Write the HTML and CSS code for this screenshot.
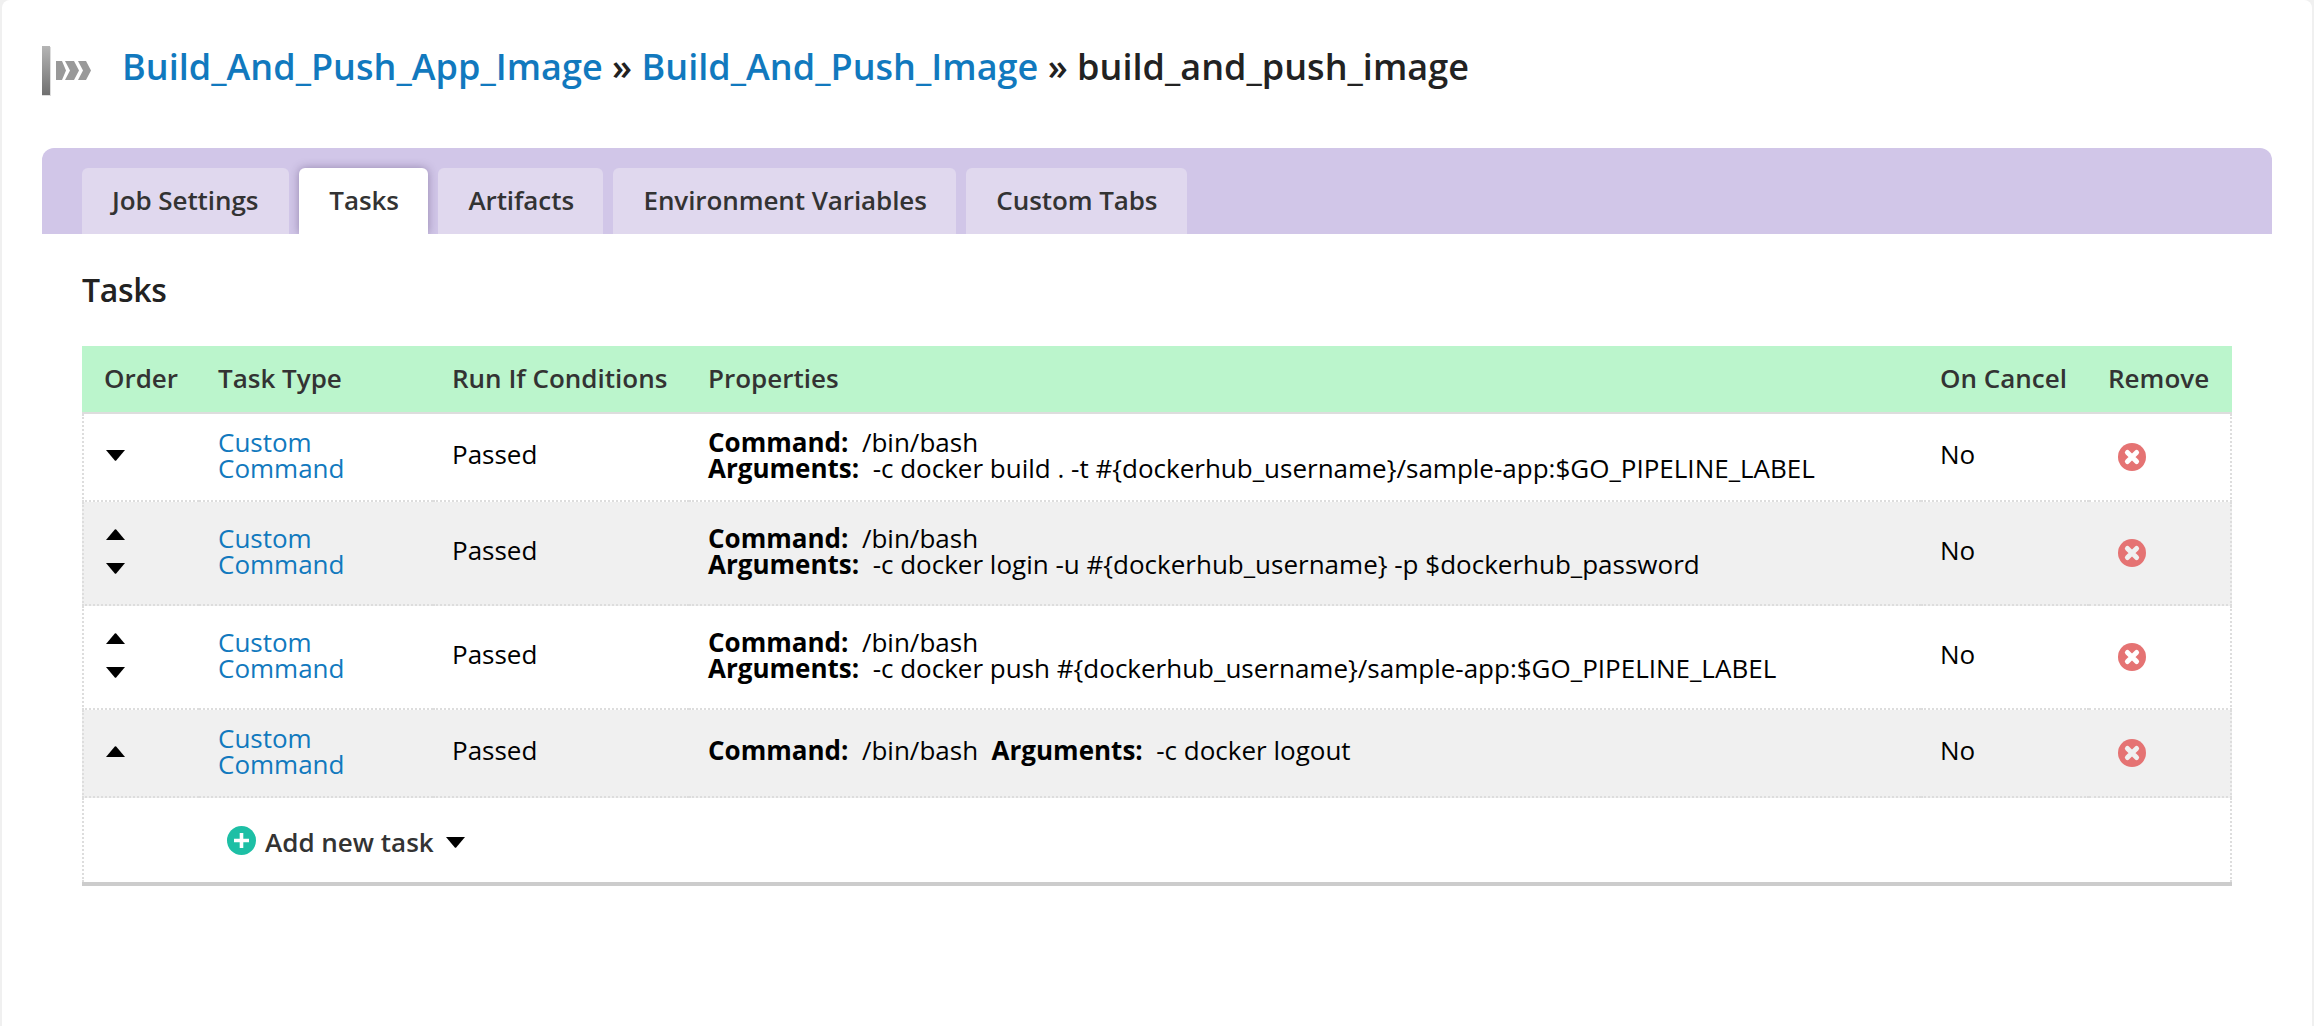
FILE: index.html
```html
<!DOCTYPE html>
<html lang="en">
<head>
<meta charset="utf-8">
<title>build_and_push_image</title>
<link rel="stylesheet" href="styles.css">
</head>
<body>
<svg class="defs" width="0" height="0" aria-hidden="true">
  <defs>
    <linearGradient id="bar" x1="0" y1="0" x2="0" y2="1"><stop offset="0" stop-color="#b5b5b5"/><stop offset="1" stop-color="#707070"/></linearGradient>
    <symbol id="down" viewBox="0 0 19 11"><path d="M0 0h19l-8.800 10.400q-.7.800-1.400 0z"/></symbol>
    <symbol id="up" viewBox="0 0 19 11"><path d="M0 11h19L10.200.6q-.7-.8-1.400 0z"/></symbol>
    <symbol id="cross" viewBox="0 0 28 28"><circle cx="14" cy="14" r="14" fill="#e57373"/><path d="M9.400 9.400l9.200 9.200M18.600 9.400l-9.200 9.200" stroke="currentColor" stroke-width="5" stroke-linecap="round"/></symbol>
  </defs>
</svg>
<main class="page">
  <header class="title">
    <svg class="job-icon" width="52" height="54" viewBox="0 0 52 54">
      <path d="M0 3h9v49H0z" fill="#ddd"/>
      <path d="M0 2h8v49H0z" fill="url(#bar)"/>
      <path d="M14 17h6l4 9.500-4 9.500h-6zM23 17h9l5 9.500-5 9.500h-9l5-9.500zM36 17h8l5 9.500-5 9.500h-8l5-9.500z" fill="#999"/>
    </svg>
    <h1 class="crumbs"><a>Build_And_Push_App_Image</a> » <a>Build_And_Push_Image</a> » build_and_push_image</h1>
  </header>
  <nav class="tabs">
    <a class="tab">Job Settings</a>
    <a class="tab tab-active">Tasks</a>
    <a class="tab">Artifacts</a>
    <a class="tab">Environment Variables</a>
    <a class="tab">Custom Tabs</a>
  </nav>
  <section class="content">
    <h2 class="heading">Tasks</h2>
    <table class="tasks">
      <colgroup><col class="c-order"><col class="c-type"><col class="c-run"><col class="c-props"><col class="c-cancel"><col class="c-remove"></colgroup>
      <thead>
        <tr><th>Order</th><th>Task Type</th><th>Run If Conditions</th><th>Properties</th><th>On Cancel</th><th>Remove</th></tr>
      </thead>
      <tbody>
        <tr class="row">
          <td><div class="order"><svg class="arrow"><use href="#down"/></svg></div></td>
          <td class="two-line"><a>Custom Command</a></td><td>Passed</td>
          <td class="two-line"><b>Command:</b>&nbsp; /bin/bash<br><b>Arguments:</b>&nbsp; -c docker build . -t #{dockerhub_username}/sample-app:$GO_PIPELINE_LABEL</td>
          <td>No</td><td><svg class="remove"><use href="#cross"/></svg></td>
        </tr>
        <tr class="row row-tall row-alt">
          <td><div class="order"><svg class="arrow"><use href="#up"/></svg><svg class="arrow"><use href="#down"/></svg></div></td>
          <td class="two-line"><a>Custom Command</a></td><td>Passed</td>
          <td class="two-line"><b>Command:</b>&nbsp; /bin/bash<br><b>Arguments:</b>&nbsp; -c docker login -u #{dockerhub_username} -p $dockerhub_password</td>
          <td>No</td><td><svg class="remove"><use href="#cross"/></svg></td>
        </tr>
        <tr class="row row-tall">
          <td><div class="order"><svg class="arrow"><use href="#up"/></svg><svg class="arrow"><use href="#down"/></svg></div></td>
          <td class="two-line"><a>Custom Command</a></td><td>Passed</td>
          <td class="two-line"><b>Command:</b>&nbsp; /bin/bash<br><b>Arguments:</b>&nbsp; -c docker push #{dockerhub_username}/sample-app:$GO_PIPELINE_LABEL</td>
          <td>No</td><td><svg class="remove"><use href="#cross"/></svg></td>
        </tr>
        <tr class="row row-alt">
          <td><div class="order"><svg class="arrow"><use href="#up"/></svg></div></td>
          <td class="two-line"><a>Custom Command</a></td><td>Passed</td>
          <td><b>Command:</b>&nbsp; /bin/bash&nbsp; <b>Arguments:</b>&nbsp; -c docker logout</td>
          <td>No</td><td><svg class="remove"><use href="#cross"/></svg></td>
        </tr>
        <tr class="row-add">
          <td></td>
          <td colspan="5"><div class="add">
            <svg class="plus" viewBox="0 0 29 29"><circle cx="14.500" cy="14.500" r="14.500" fill="#1dbfa5"/><path d="M14.500 7v15M7 14.500h15" stroke="#fff" stroke-width="3.600"/></svg>
            <span>Add new task</span>
            <svg class="arrow"><use href="#down"/></svg>
          </div></td>
        </tr>
      </tbody>
    </table>
  </section>
</main>
</body>
</html>
```
FILE: styles.css
```css
* { box-sizing: border-box; }
body {
  margin: 0;
  background: #f0f0f0;
  color: #000;
  font: 400 26px/26px "Open Sans", "Noto Sans", sans-serif;
}
a { color: #1179be; }
.defs { display: block; }
.page {
  min-height: 1026px;
  margin: 0 2px;
  padding: 0 40px;
  background: #fff;
  border-radius: 8px 8px 0 0;
}
.title {
  display: flex;
  align-items: flex-start;
  height: 148px;
  padding-top: 44px;
}
.job-icon { flex: none; }
.crumbs {
  margin: 0 0 0 28px;
  padding-top: 3px;
  font-size: 36px;
  line-height: 40px;
  font-weight: 600;
  letter-spacing: .02px;
  color: #222;
  white-space: nowrap;
}
.tabs {
  display: flex;
  gap: 10px;
  height: 86px;
  padding: 20px 40px 0;
  overflow: hidden;
  background: #d1c6e8;
  border-radius: 12px 12px 0 0;
}
.tab {
  padding: 19px 29.5px 0 30px;
  background: #e0d8ee;
  border-radius: 6px 6px 0 0;
  color: #333;
  font-weight: 600;
  letter-spacing: -.08px;
  white-space: nowrap;
}
.tab:first-child { padding-right: 31px; }
.tab-active { background: #fff; box-shadow: 0 0 10px rgba(60, 40, 90, .4); }
.content { padding: 0 40px; }
.heading {
  margin: 0;
  padding-top: 36px;
  height: 112px;
  font-size: 32px;
  line-height: 40px;
  font-weight: 600;
  letter-spacing: -.3px;
  color: #222;
}
.tasks {
  width: 2150px;
  table-layout: fixed;
  border-collapse: separate;
  border-spacing: 0;
  border-bottom: 4px solid #ccc;
}
.c-order { width: 117px; }
.c-type { width: 234px; }
.c-run { width: 256px; }
.c-props { width: 1232px; }
.c-cancel { width: 168px; }
.c-remove { width: 143px; }
th {
  height: 68px;
  padding: 0 0 2px 19px;
  background: #bbf5cc;
  border-bottom: 2px solid #ddd;
  color: #333;
  font-weight: 600;
  text-align: left;
  white-space: nowrap;
}
th:first-child { padding-left: 22px; }
td {
  padding: 12px 18px 18px 19px;
  border-bottom: 2px dotted #ddd;
  vertical-align: middle;
}
td:first-child { border-left: 2px dotted #ddd; }
td:last-child { border-right: 2px dotted #ddd; }
.row td { height: 88px; }
.row-tall td { height: 104px; }
.row td:nth-child(2) { padding-right: 70px; }
.row td.two-line { padding-top: 14px; }
.row-alt td { background: #f0f0f0; }
.order {
  display: flex;
  flex-direction: column;
  gap: 23px;
  padding: 2px 0 0 2.5px;
}
.arrow { display: block; width: 19px; height: 11px; }
.remove {
  display: block;
  width: 28px;
  height: 28px;
  margin: 5px 0 0 10px;
  color: #fff;
}
.row-alt .remove { color: #f0f0f0; }
.row-add td { height: 84px; padding: 0 0 0 19px; border-bottom: 0; }
.add {
  display: flex;
  align-items: center;
  padding-left: 9px;
  color: #333;
  font-weight: 600;
}
.plus { width: 29px; height: 29px; margin-right: 9px; }
.add span { padding-top: 3px; }
.add .arrow { margin: 4px 0 0 12px; color: #000; }
```
